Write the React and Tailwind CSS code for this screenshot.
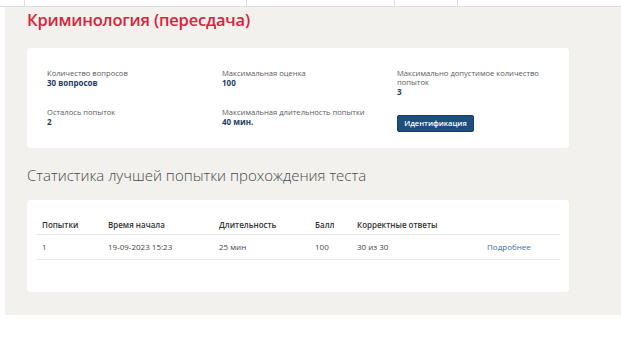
import React from "react";

const info = [
  { label: "Количество вопросов", value: "30 вопросов" },
  { label: "Максимальная оценка", value: "100" },
  { label: "Максимально допустимое количество попыток", value: "3" },
  { label: "Осталось попыток", value: "2" },
  { label: "Максимальная длительность попытки", value: "40 мин." },
];

const cols = "grid grid-cols-[66px_111px_96px_42px_130px_1fr]";

export default function App() {
  return (
    <div
      className="w-[621px] h-[337px] bg-white overflow-hidden"
      style={{ fontFamily: '"Open Sans", "Noto Sans", sans-serif' }}
    >
      {/* top strip */}
      <div className="flex h-[7px] border-b border-[#dcdcdc]">
        <div className="w-[25px] border-r border-[#dcdcdc]" />
        <div className="w-[222px] border-r border-[#dcdcdc]" />
        <div className="w-[148px] border-r border-[#dcdcdc]" />
        <div className="w-[63px] border-r border-[#dcdcdc]" />
        <div className="flex-1" />
      </div>

      <div className="ml-[5px] h-[308px] bg-[#f2f1ee] pl-[22px] pr-[52px]">
        <h1 className="pt-[1px] text-[16.5px] leading-6 font-semibold text-[#d5243c] tracking-[-0.2px]">
          Криминология (пересдача)
        </h1>

        <div className="mt-[16px] h-[100px] w-[542px] rounded-[3px] bg-white pt-[21px] pl-[20px] shadow-[0_0_1px_rgba(0,0,0,0.08)]">
          <div className="grid grid-cols-[175px_175px_160px] gap-y-[11px]">
            {info.slice(0, 3).map((it) => (
              <div key={it.label}>
                <div className="w-[152px] text-[7.6px] leading-[9px] text-[#5a5a5a]">{it.label}</div>
                <div className="text-[8px] leading-[10px] font-bold text-[#1f3b63]">{it.value}</div>
              </div>
            ))}
            {info.slice(3).map((it) => (
              <div key={it.label}>
                <div className="text-[7.6px] leading-[9px] text-[#5a5a5a]">{it.label}</div>
                <div className="text-[8px] leading-[10px] font-bold text-[#1f3b63]">{it.value}</div>
              </div>
            ))}
            <div>
              <button className="h-[17px] w-[77px] rounded-[2px] border border-[#163f68] bg-[#1e4e7e] text-[7.5px] font-semibold text-white">
                Идентификация
              </button>
            </div>
          </div>
        </div>

        <h2 className="mt-[17px] text-[15px] leading-5 font-light text-[#4a4a4a]">
          Статистика лучшей попытки прохождения теста
        </h2>

        <div className="mt-[15px] h-[92px] w-[542px] rounded-[3px] bg-white px-[9px] pt-[16px] shadow-[0_0_1px_rgba(0,0,0,0.08)]">
          <div className={`${cols} h-[19px] items-center border-b border-[#e8e8e8] text-[8px] font-semibold text-[#333]`}>
            <div className="pl-[6px]">Попытки</div>
            <div className="pl-[6px]">Время начала</div>
            <div className="pl-[6px]">Длительность</div>
            <div className="pl-[6px]">Балл</div>
            <div className="pl-[6px]">Корректные ответы</div>
            <div />
          </div>
          <div className={`${cols} h-[25px] items-center border-b border-[#e8e8e8] text-[8px] text-[#444]`}>
            <div className="pl-[6px]">1</div>
            <div className="pl-[6px]">19-09-2023 15:23</div>
            <div className="pl-[6px]">25 мин</div>
            <div className="pl-[6px]">100</div>
            <div className="pl-[6px]">30 из 30</div>
            <div className="pl-[6px] text-[#3b6ea5]">Подробнее</div>
          </div>
        </div>
      </div>
    </div>
  );
}
